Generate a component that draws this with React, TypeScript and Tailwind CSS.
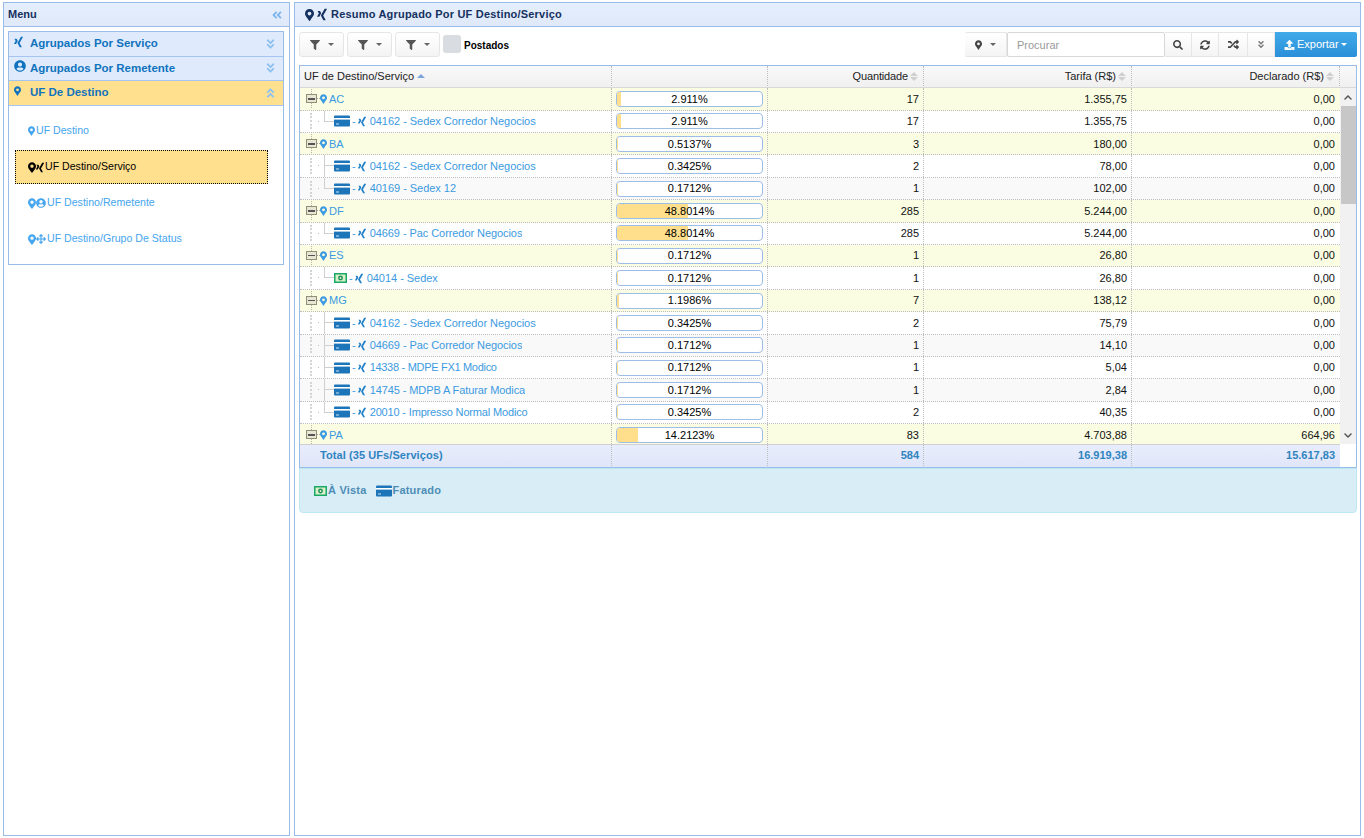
import { FaAngleDoubleDown, FaAngleDoubleLeft, FaAngleDoubleUp, FaArrowsAlt, FaFilter, FaMapMarkerAlt, FaRandom, FaSearch, FaSyncAlt, FaUpload, FaUserCircle, FaXing, FaChevronDown, FaChevronUp } from 'react-icons/fa'

type Row = { label: string; pct: number; pctText: string; qty: string; tarifa: string; decl: string; pay?: 'card' | 'cash'; last?: boolean; alt?: boolean; fit?: string }

const rows: Row[] = [
  { label: 'AC', pct: 2.911, pctText: '2.911%', qty: '17', tarifa: '1.355,75', decl: '0,00' },
  { label: '04162 - Sedex Corredor Negocios', pct: 2.911, pctText: '2.911%', qty: '17', tarifa: '1.355,75', decl: '0,00', pay: 'card', last: true },
  { label: 'BA', pct: 0.5137, pctText: '0.5137%', qty: '3', tarifa: '180,00', decl: '0,00' },
  { label: '04162 - Sedex Corredor Negocios', pct: 0.3425, pctText: '0.3425%', qty: '2', tarifa: '78,00', decl: '0,00', pay: 'card' },
  { label: '40169 - Sedex 12', pct: 0.1712, pctText: '0.1712%', qty: '1', tarifa: '102,00', decl: '0,00', pay: 'card', last: true, alt: true },
  { label: 'DF', pct: 48.8014, pctText: '48.8014%', qty: '285', tarifa: '5.244,00', decl: '0,00' },
  { label: '04669 - Pac Corredor Negocios', pct: 48.8014, pctText: '48.8014%', qty: '285', tarifa: '5.244,00', decl: '0,00', pay: 'card', last: true, fit: 'tracking-[-0.07px]' },
  { label: 'ES', pct: 0.1712, pctText: '0.1712%', qty: '1', tarifa: '26,80', decl: '0,00' },
  { label: '04014 - Sedex', pct: 0.1712, pctText: '0.1712%', qty: '1', tarifa: '26,80', decl: '0,00', pay: 'cash', last: true },
  { label: 'MG', pct: 1.1986, pctText: '1.1986%', qty: '7', tarifa: '138,12', decl: '0,00' },
  { label: '04162 - Sedex Corredor Negocios', pct: 0.3425, pctText: '0.3425%', qty: '2', tarifa: '75,79', decl: '0,00', pay: 'card' },
  { label: '04669 - Pac Corredor Negocios', pct: 0.1712, pctText: '0.1712%', qty: '1', tarifa: '14,10', decl: '0,00', pay: 'card', alt: true, fit: 'tracking-[-0.07px]' },
  { label: '14338 - MDPE FX1 Modico', pct: 0.1712, pctText: '0.1712%', qty: '1', tarifa: '5,04', decl: '0,00', pay: 'card', fit: 'tracking-[-0.3px]' },
  { label: '14745 - MDPB A Faturar Modica', pct: 0.1712, pctText: '0.1712%', qty: '1', tarifa: '2,84', decl: '0,00', pay: 'card', alt: true, fit: 'tracking-[-0.1px]' },
  { label: '20010 - Impresso Normal Modico', pct: 0.3425, pctText: '0.3425%', qty: '2', tarifa: '40,35', decl: '0,00', pay: 'card', last: true, fit: 'tracking-[-0.16px]' },
  { label: 'PA', pct: 14.2123, pctText: '14.2123%', qty: '83', tarifa: '4.703,88', decl: '664,96' },
]

const cols = 'grid grid-cols-[312px_156px_156px_208px_208px]'

function CardIcon() {
  return (
    <svg viewBox="0 0 16 12" className="w-[16px] h-[12px] shrink-0">
      <rect x="0" y="0.5" width="16" height="11" rx="1" fill="#1c75b8" />
      <rect x="0" y="3" width="16" height="1.6" fill="#fff" />
      <rect x="2" y="8.5" width="3" height="1" fill="#cfe3f3" />
    </svg>
  )
}

function CashIcon() {
  return (
    <svg viewBox="0 0 13 10" className="w-[13px] h-[10px] shrink-0">
      <rect x="0" y="0" width="13" height="10" fill="#1aa865" />
      <rect x="1.5" y="1.5" width="10" height="7" fill="#d8efc8" />
      <circle cx="6.5" cy="5" r="2.4" fill="#1c8f55" />
      <circle cx="6.5" cy="5" r="0.9" fill="#e6f6dc" />
    </svg>
  )
}

function SortIcon() {
  return (
    <span className="flex flex-col gap-[1px] ml-[2px] shrink-0">
      <span className="w-0 h-0 border-x-[4px] border-x-transparent border-b-[4px] border-b-[#cfcfcf]" />
      <span className="w-0 h-0 border-x-[4px] border-x-transparent border-t-[4px] border-t-[#cfcfcf]" />
    </span>
  )
}

function Caret({ color = 'border-t-[#666]' }: { color?: string }) {
  return <span className={`w-0 h-0 border-x-[3px] border-x-transparent border-t-[3px] ${color}`} />
}

function FilterButton() {
  return (
    <button className="w-[45px] h-[25px] flex items-center justify-center gap-[8px] rounded-[3px] border border-[#e6e6e6] bg-gradient-to-b from-white to-[#f4f4f4] text-[#555]">
      <FaFilter className="w-[10px] h-[10px]" />
      <Caret />
    </button>
  )
}

function ToolButton({ children, className = '' }: { children: React.ReactNode; className?: string }) {
  return (
    <button className={`h-[25px] flex items-center justify-center border border-l-0 border-[#e6e6e6] bg-gradient-to-b from-white to-[#f4f4f4] text-[#444] ${className}`}>
      {children}
    </button>
  )
}

function TreeToggle() {
  return (
    <span className="relative w-[11px] h-[9px] shrink-0 border border-[#8f8f7a] bg-[#e6e6d2] flex items-center justify-center">
      <span className="w-[7px] h-[1.5px] bg-[#555]" />
      <span className="absolute left-[4px] -top-[6px] h-[5px] border-l border-dotted border-[#b5b5a5]" />
      <span className="absolute left-[4px] -bottom-[6px] h-[5px] border-l border-dotted border-[#b5b5a5]" />
    </span>
  )
}

function Progress({ pct, text }: { pct: number; text: string }) {
  return (
    <div className="relative h-[16px] w-[147px] rounded-[4px] border border-[#9dbce6] bg-white overflow-hidden">
      <div className="h-full bg-[#ffdf8c]" style={{ width: `${pct}%` }} />
      <span className="absolute inset-0 flex items-center justify-center text-[11px] text-black">{text}</span>
    </div>
  )
}

function TreeRow({ row }: { row: Row }) {
  const group = !row.pay
  const bg = group ? 'bg-[#fafde2]' : row.alt ? 'bg-[#f9f9f9]' : 'bg-white'
  return (
    <div className={`${cols} h-[22.4px] border-b border-dotted border-[#bdbdbd] ${bg} text-[11px] text-[#111]`}>
      <div className="flex items-center border-r border-dotted border-[#bdbdbd] pl-[6px] text-[#3b9ae1] overflow-hidden">
        {group ? (
          <>
            <TreeToggle />
            <span className="w-[3px] border-t border-dotted border-[#aaa] shrink-0" />
            <FaMapMarkerAlt className="w-[7px] h-[10px] shrink-0" />
            <span className="ml-[2px]">{row.label}</span>
          </>
        ) : (
          <>
            <span className="w-[2px] h-[16px] ml-[4px] border-l-2 border-dotted border-[#d4d4d4] shrink-0" />
            <span className="relative w-[21px] h-full ml-[1px] shrink-0">
              <span className="absolute left-[5px] top-[10px] w-px h-px bg-[#bbb]" />
              <span className={`absolute left-[11px] top-0 w-px border-l border-[#cfcfcf] ${row.last ? 'h-[11px]' : 'h-full'}`} />
              <span className="absolute left-[11px] top-[10px] w-[10px] border-t border-[#cfcfcf]" />
            </span>
            {row.pay === 'card' ? <CardIcon /> : <CashIcon />}
            <span className="mx-[2px]">-</span>
            <FaXing className="w-[8px] h-[11px] shrink-0 text-[#1f80c8] mr-[4px]" />
            <span className={`truncate ${row.fit ?? 'tracking-[-0.03px]'}`}>{row.label}</span>
          </>
        )}
      </div>
      <div className="flex items-center justify-center border-r border-dotted border-[#bdbdbd]">
        <Progress pct={row.pct} text={row.pctText} />
      </div>
      <div className="flex items-center justify-end pr-[4px] border-r border-dotted border-[#bdbdbd]">{row.qty}</div>
      <div className="flex items-center justify-end pr-[4px] border-r border-dotted border-[#bdbdbd]">{row.tarifa}</div>
      <div className="flex items-center justify-end pr-[5px]">{row.decl}</div>
    </div>
  )
}

function Accordion({ icon, title, active }: { icon: React.ReactNode; title: string; active?: boolean }) {
  return (
    <div className={`h-[24.5px] flex items-center pl-[5px] pr-[7px] border-b border-[#a5c4ef] ${active ? 'bg-[#ffe08f]' : 'bg-[#dfebfd]'}`}>
      <span className="w-[16px] flex text-[#1173bd] -mt-[4px]">{icon}</span>
      <span className="text-[11.5px] font-bold text-[#1173bd]">{title}</span>
      <span className="ml-auto text-[#8fc1f0]">
        {active ? <FaAngleDoubleUp className="w-[11px] h-[12px]" /> : <FaAngleDoubleDown className="w-[11px] h-[12px]" />}
      </span>
    </div>
  )
}

function SubItem({ icons, label, selected }: { icons: React.ReactNode; label: string; selected?: boolean }) {
  return (
    <div className={`h-[34px] w-[253px] flex items-center pl-[12px] text-[10.6px] ${selected ? 'bg-[#ffe08f] border border-dotted border-black text-black' : 'text-[#45a5ee]'}`}>
      {icons}
      <span className="ml-[1px]">{label}</span>
    </div>
  )
}

export default function App() {
  return (
    <div className="w-[1364px] h-[838px] bg-white flex gap-[4px] pt-[2px] pb-[2px] pl-[3px] font-['Liberation_Sans',Arial,sans-serif] overflow-hidden">
      {/* menu */}
      <aside className="w-[287px] h-[834px] shrink-0 border border-[#99bce8] bg-white">
        <div className="h-[24px] flex items-center justify-between px-[4px] border-b border-[#99bce8] bg-gradient-to-b from-[#e4eefd] to-[#dfe9f9]">
          <span className="text-[11px] font-bold text-[#15315f]">Menu</span>
          <FaAngleDoubleLeft className="w-[10px] h-[12px] text-[#7fb5ea] mr-[3px]" />
        </div>
        <div className="ml-[4px] mr-[5px] mt-[4px] border border-[#99bce8]">
          <Accordion icon={<FaXing className="w-[9px] h-[12px]" />} title="Agrupados Por Serviço" />
          <Accordion icon={<FaUserCircle className="w-[12px] h-[12px]" />} title="Agrupados Por Remetente" />
          <Accordion icon={<FaMapMarkerAlt className="w-[7px] h-[10px]" />} title="UF De Destino" active />
          <div className="pl-[6px] pt-[8.5px] pb-[8px] flex flex-col gap-[2px]">
            <SubItem icons={<FaMapMarkerAlt className="w-[7px] h-[10px] ml-[1px]" />} label="UF Destino" />
            <SubItem
              selected
              icons={<><FaMapMarkerAlt className="w-[8px] h-[11px]" /><FaXing className="w-[8px] h-[11px]" /></>}
              label="UF Destino/Serviço"
            />
            <SubItem
              icons={<><FaMapMarkerAlt className="w-[8px] h-[11px] ml-[1px]" /><FaUserCircle className="w-[10px] h-[10px]" /></>}
              label="UF Destino/Remetente"
            />
            <SubItem
              icons={<><FaMapMarkerAlt className="w-[8px] h-[11px] ml-[1px]" /><FaArrowsAlt className="w-[10px] h-[10px]" /></>}
              label="UF Destino/Grupo De Status"
            />
          </div>
        </div>
      </aside>

      {/* content */}
      <main className="w-[1067px] h-[834px] shrink-0 border border-[#99bce8] bg-white">
        <div className="h-[24px] flex items-center pl-[10px] border-b border-[#99bce8] bg-gradient-to-b from-[#e4eefd] to-[#dfe9f9] text-[#15315f]">
          <FaMapMarkerAlt className="w-[9px] h-[12px]" />
          <FaXing className="w-[10px] h-[13px] ml-[3px]" />
          <span className="text-[11px] font-bold ml-[4px] tracking-[0.2px]">Resumo Agrupado Por UF Destino/Serviço</span>
        </div>

        <div className="ml-[4px] mr-[3px] h-[38px] flex items-start pt-[5px]">
          <div className="flex gap-[3px]">
            <FilterButton />
            <FilterButton />
            <FilterButton />
          </div>
          <span className="w-[18px] h-[18px] ml-[3px] mt-[3px] rounded-[3px] bg-[#d9dde2]" />
          <span className="ml-[3px] mt-[6px] text-[10px] font-bold text-black">Postados</span>
          <div className="ml-auto flex items-center">
            <ToolButton className="w-[42px] gap-[8px] border-l rounded-l-[2px]">
              <FaMapMarkerAlt className="w-[7px] h-[10px]" />
              <Caret />
            </ToolButton>
            <input
              readOnly
              placeholder="Procurar"
              className="w-[158px] h-[25px] px-[9px] text-[11px] rounded-[2px] border border-[#d8d8d8] outline-none placeholder:text-[#999]"
            />
            <ToolButton className="w-[27px]"><FaSearch className="w-[10px] h-[10px]" /></ToolButton>
            <ToolButton className="w-[27px]"><FaSyncAlt className="w-[10px] h-[10px]" /></ToolButton>
            <ToolButton className="w-[29px]"><FaRandom className="w-[11px] h-[11px]" /></ToolButton>
            <ToolButton className="w-[27px]"><FaAngleDoubleDown className="w-[8px] h-[9px] text-[#777]" /></ToolButton>
            <button className="w-[82px] h-[25px] rounded-r-[2px] flex items-center pl-[9px] gap-[2px] bg-gradient-to-b from-[#41aaea] to-[#2a8fd8] text-white text-[11px]">
              <FaUpload className="w-[11px] h-[10px]" />
              Exportar
              <Caret color="border-t-white" />
            </button>
          </div>
        </div>

        {/* table */}
        <div className="ml-[4px] mr-[3px] border border-[#99bce8] h-[403px]">
          <div className={`${cols} h-[22.3px] pb-[1px] border-b border-[#d8d8d8] bg-gradient-to-b from-[#f9f9f9] to-[#f0f0f0] text-[11px] text-[#222] pr-[16px]`}>
            <div className="flex items-center pl-[4px] border-r border-dotted border-[#bdbdbd]">
              UF de Destino/Serviço
              <span className="ml-[3px] w-0 h-0 border-x-[4px] border-x-transparent border-b-[4px] border-b-[#7aa5dd]" />
            </div>
            <div className="border-r border-dotted border-[#bdbdbd]" />
            <div className="flex items-center justify-end pr-[5px] border-r border-dotted border-[#bdbdbd]"><span className="tracking-[-0.15px]">Quantidade</span><SortIcon /></div>
            <div className="flex items-center justify-end pr-[5px] border-r border-dotted border-[#bdbdbd]">Tarifa (R$)<SortIcon /></div>
            <div className="flex items-center justify-end pr-[5px] border-r border-dotted border-[#bdbdbd]">Declarado (R$)<SortIcon /></div>
          </div>

          <div className="flex h-[356.2px]">
            <div className="w-[1040px] shrink-0 overflow-hidden">
              {rows.map((r, i) => (
                <TreeRow key={i} row={r} />
              ))}
            </div>
            <div className="flex-1 bg-[#f1f1f1] flex flex-col items-center">
              <div className="h-[17.5px] flex items-center justify-center text-[#555]"><FaChevronUp className="w-[10px] h-[9px]" /></div>
              <div className="w-[15px] h-[98px] bg-[#c7c7c7]" />
              <div className="mt-auto h-[17px] flex items-center justify-center text-[#555]"><FaChevronDown className="w-[10px] h-[9px]" /></div>
            </div>
          </div>

          <div className={`${cols} w-[1040px] h-[22.5px] pb-[1px] border-t border-[#d0d0d0] bg-gradient-to-b from-[#e8edfd] to-[#e0e6f8] text-[11px] font-bold text-[#2f84c0]`}>
            <div className="flex items-center pl-[20px] border-r border-dotted border-[#bdbdbd] tracking-[0.08px]">Total (35 UFs/Serviços)</div>
            <div className="border-r border-dotted border-[#bdbdbd]" />
            <div className="flex items-center justify-end pr-[4px] border-r border-dotted border-[#bdbdbd]">584</div>
            <div className="flex items-center justify-end pr-[4px] border-r border-dotted border-[#bdbdbd]">16.919,38</div>
            <div className="flex items-center justify-end pr-[5px]">15.617,83</div>
          </div>
        </div>

        {/* legend */}
        <div className="ml-[4px] mr-[3px] h-[45px] flex items-center gap-[9px] pl-[14px] rounded-b-[4px] border border-[#bce8f1] bg-[#d9edf7] text-[11px] font-bold text-[#4d8db5] tracking-[0.2px]">
          <span className="flex items-center gap-[1px]"><CashIcon />À Vista</span>
          <span className="flex items-center gap-[1px]"><CardIcon />Faturado</span>
        </div>
      </main>
    </div>
  )
}
